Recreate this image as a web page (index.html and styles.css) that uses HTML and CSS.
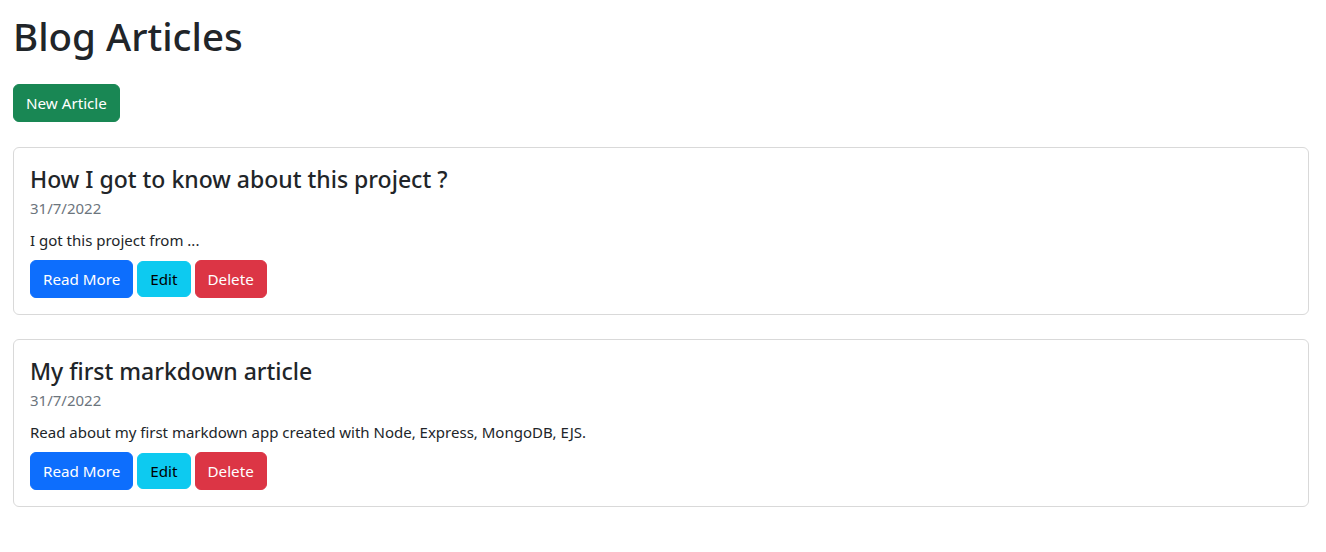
FILE: index.html
```html
<!DOCTYPE html>
<html lang="en">
<head>
<meta charset="utf-8">
<title>Blog</title>
<link rel="stylesheet" href="styles.css">
</head>
<body>
<div class="container">
  <h1 class="page-title">Blog Articles</h1>
  <a class="btn btn-success" href="#">New Article</a>

  <div class="card">
    <div class="card-body">
      <h4 class="card-title">How I got to know about this project ?</h4>
      <div class="card-date">31/7/2022</div>
      <div class="card-text">I got this project from ...</div>
      <div class="actions">
        <a class="btn btn-primary" href="#">Read More</a>
        <a class="btn btn-info" href="#">Edit</a>
        <button class="btn btn-danger" type="button">Delete</button>
      </div>
    </div>
  </div>

  <div class="card">
    <div class="card-body">
      <h4 class="card-title">My first markdown article</h4>
      <div class="card-date">31/7/2022</div>
      <div class="card-text">Read about my first markdown app created with Node, Express, MongoDB, EJS.</div>
      <div class="actions">
        <a class="btn btn-primary" href="#">Read More</a>
        <a class="btn btn-info" href="#">Edit</a>
        <button class="btn btn-danger" type="button">Delete</button>
      </div>
    </div>
  </div>
</div>
</body>
</html>
```

FILE: styles.css
```css
* { box-sizing: border-box; }
body {
  margin: 0;
  font-family: "Noto Sans", "Open Sans", sans-serif;
  font-size: 15px;
  line-height: 1.5;
  color: #212529;
  background: #fff;
}
.container {
  padding: 12px 17px 12px 13px;
  display: flex;
  flex-direction: column;
  align-items: flex-start;
}
.page-title {
  margin: 0 0 24px 0;
  font-size: 38.5px;
  font-weight: 500;
  line-height: 48px;
}
.btn {
  display: inline-block;
  padding: 6px 12px;
  font-family: inherit;
  font-size: 15.2px;
  line-height: 24px;
  border: 1px solid transparent;
  border-radius: 6px;
  text-decoration: none;
  color: #fff;
  cursor: pointer;
}
.btn-success { background: #198754; border-color: #198754; margin-bottom: 25px; }
.btn-primary { background: #0d6efd; border-color: #0d6efd; }
.btn-info { background: #0dcaf0; border-color: #0dcaf0; color: #000; padding: 5px 12px; align-self: center; }
.btn-danger { background: #dc3545; border-color: #dc3545; }
.card {
  width: 100%;
  border: 1px solid #d9d9d9;
  border-radius: 6px;
  margin-bottom: 24px;
}
.card-body { padding: 16px; }
.card-title {
  margin: 0 0 5px 0;
  font-size: 23px;
  font-weight: 500;
  line-height: 30px;
}
.card-date {
  color: #6c757d;
  font-size: 15px;
  line-height: 19px;
  margin-bottom: 10px;
}
.card-text {
  font-size: 15px;
  line-height: 24px;
  margin-bottom: 8px;
}
.actions {
  display: flex;
  gap: 4px;
}
```
